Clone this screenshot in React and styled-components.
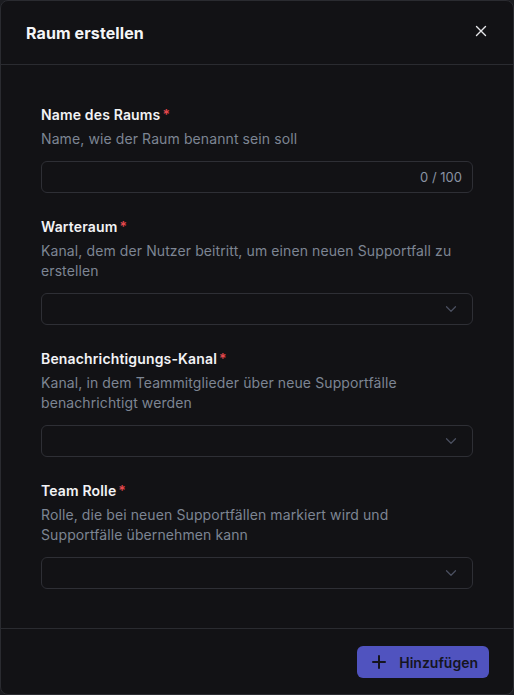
import { createGlobalStyle } from "styled-components";
import styled from "styled-components";

const GlobalStyle = createGlobalStyle`
  html, body {
    margin: 0;
    padding: 0;
    background: #1b1c20;
  }
  body {
    font-family: Inter, "Noto Sans", sans-serif;
  }
`;

const Modal = styled.div`
  box-sizing: border-box;
  width: 514px;
  height: 695px;
  display: flex;
  flex-direction: column;
  background: #121215;
  border: 1px solid #2a2b30;
  border-radius: 8px;
  overflow: hidden;
`;

const Header = styled.div`
  display: flex;
  align-items: center;
  justify-content: space-between;
  height: 63px;
  padding: 0 26px 0 25px;
  border-bottom: 1px solid #2a2b30;
  flex-shrink: 0;
`;

const Title = styled.h2`
  margin: 0;
  font-size: 16px;
  font-weight: 700;
  color: #f4f5f7;
  letter-spacing: 0.1px;
`;

const CloseButton = styled.button`
  background: none;
  border: none;
  padding: 0;
  width: 12px;
  height: 12px;
  display: flex;
  align-items: center;
  justify-content: center;
  color: #e6e7ea;
  cursor: pointer;
  margin-top: -4px;
`;

const Body = styled.div`
  flex: 1;
  display: flex;
  flex-direction: column;
  gap: 24px;
  padding: 40px 40px 0 40px;
`;

const Field = styled.div`
  display: flex;
  flex-direction: column;
`;

const Label = styled.div`
  font-size: 14px;
  font-weight: 600;
  color: #f2f3f5;
  line-height: 20px;
  letter-spacing: 0.15px;
`;

const Required = styled.span`
  color: #e5484d;
  margin-left: 2px;
`;

const Description = styled.div`
  margin-top: 4px;
  font-size: 14px;
  color: #7d8593;
  line-height: 20px;
  letter-spacing: 0.1px;
  max-width: ${(p) => p.maxWidth || "432px"};
`;

const Box = styled.div`
  box-sizing: border-box;
  margin-top: 12px;
  height: 32px;
  border: 1px solid #2e2f35;
  border-radius: 6px;
  display: flex;
  align-items: center;
  justify-content: flex-end;
  padding: 0 ${(p) => (p.$select ? "12px" : "10px")} 0 13px;
`;

const Counter = styled.span`
  font-size: 13px;
  color: #8a93a3;
`;

const Chevron = styled.svg`
  color: #4b5060;
`;

const Footer = styled.div`
  border-top: 1px solid #2a2b30;
  height: 65px;
  display: flex;
  align-items: center;
  justify-content: flex-end;
  padding: 0 24px 0 0;
  flex-shrink: 0;
`;

const AddButton = styled.button`
  display: flex;
  align-items: center;
  gap: 13px;
  height: 32px;
  padding: 0 11px 0 15px;
  border: none;
  border-radius: 6px;
  background: #5053bf;
  color: #15151f;
  font-family: inherit;
  font-size: 14px;
  font-weight: 600;
  margin-top: 1px;
  cursor: pointer;
`;

const fields = [
  {
    label: "Name des Raums",
    description: "Name, wie der Raum benannt sein soll",
    counter: "0 / 100",
  },
  {
    label: "Warteraum",
    description: "Kanal, dem der Nutzer beitritt, um einen neuen Supportfall zu erstellen",
  },
  {
    label: "Benachrichtigungs-Kanal",
    description: "Kanal, in dem Teammitglieder über neue Supportfälle benachrichtigt werden",
  },
  {
    label: "Team Rolle",
    description: "Rolle, die bei neuen Supportfällen markiert wird und Supportfälle übernehmen kann",
    maxWidth: "360px",
  },
];

function ChevronDown() {
  return (
    <Chevron width="18" height="18" viewBox="0 0 24 24" fill="none" stroke="currentColor" strokeWidth="1.6" strokeLinecap="round" strokeLinejoin="round">
      <path d="M6 9l6 6 6-6" />
    </Chevron>
  );
}

export default function App() {
  return (
    <>
      <GlobalStyle />
      <Modal>
        <Header>
          <Title>Raum erstellen</Title>
          <CloseButton aria-label="Schließen">
            <svg width="12" height="12" viewBox="0 0 12 12" fill="none" stroke="currentColor" strokeWidth="1.4" strokeLinecap="round">
              <path d="M1.5 1.5l9 9M10.5 1.5l-9 9" />
            </svg>
          </CloseButton>
        </Header>
        <Body>
          {fields.map((f) => (
            <Field key={f.label}>
              <Label>
                {f.label}
                <Required>*</Required>
              </Label>
              <Description maxWidth={f.maxWidth}>{f.description}</Description>
              <Box $select={!f.counter}>
                {f.counter ? <Counter>{f.counter}</Counter> : <ChevronDown />}
              </Box>
            </Field>
          ))}
        </Body>
        <Footer>
          <AddButton>
            <svg width="14" height="14" viewBox="0 0 14 14" fill="none" stroke="currentColor" strokeWidth="2" strokeLinecap="round">
              <path d="M7 1v12M1 7h12" />
            </svg>
            Hinzufügen
          </AddButton>
        </Footer>
      </Modal>
    </>
  );
}
